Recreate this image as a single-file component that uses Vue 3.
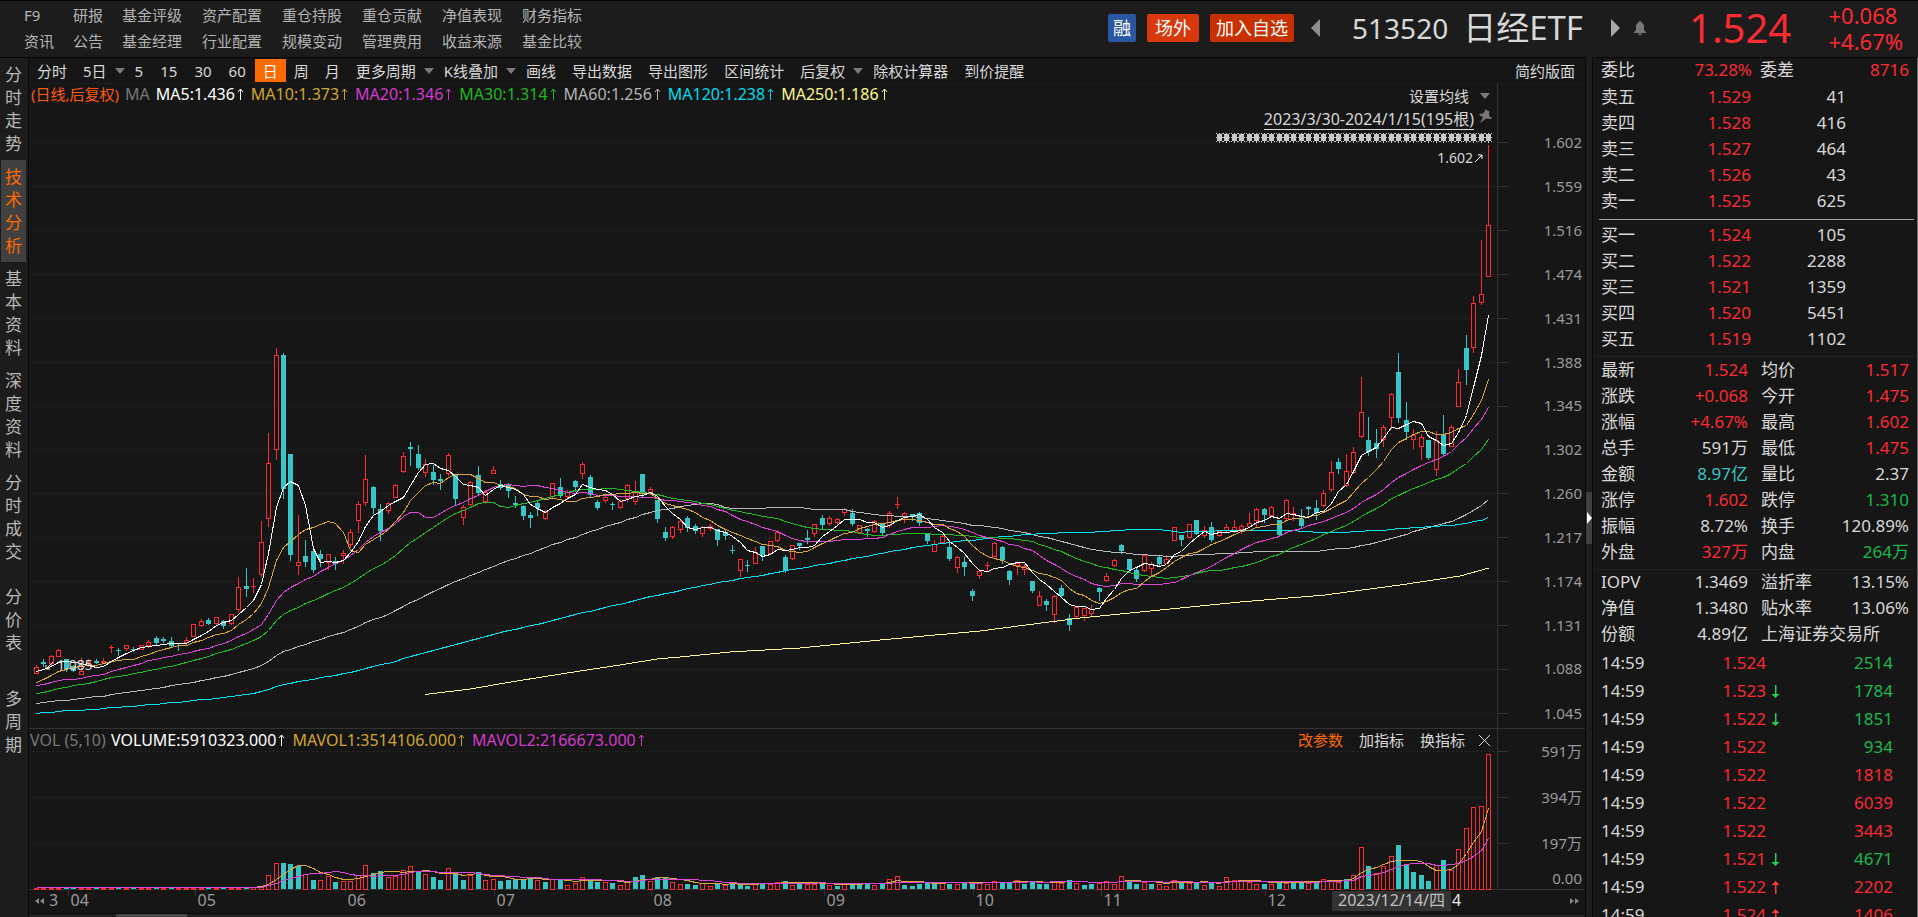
<script setup>
const nav = [
  ['F9', '研报', '基金评级', '资产配置', '重仓持股', '重仓贡献', '净值表现', '财务指标'],
  ['资讯', '公告', '基金经理', '行业配置', '规模变动', '管理费用', '收益来源', '基金比较']
]
const sideTabs = ['分时走势', '技术分析', '基本资料', '深度资料', '分时成交', '分价表', '多周期']
const tools = [
  { t: '分时' }, { t: '5日', drop: true }, { t: '5', num: true }, { t: '15', num: true },
  { t: '30', num: true }, { t: '60', num: true }, { t: '日', on: true }, { t: '周' }, { t: '月' },
  { t: '更多周期', drop: true }, { t: 'K线叠加', drop: true }, { t: '画线' }, { t: '导出数据' },
  { t: '导出图形' }, { t: '区间统计' }, { t: '后复权', drop: true }, { t: '除权计算器' }, { t: '到价提醒' }
]
const maLegend = [
  { t: 'MA5:1.436', c: 'white' }, { t: 'MA10:1.373', c: 'gold' }, { t: 'MA20:1.346', c: 'magenta' },
  { t: 'MA30:1.314', c: 'lime' }, { t: 'MA60:1.256', c: 'silver' }, { t: 'MA120:1.238', c: 'cyan' },
  { t: 'MA250:1.186', c: 'cream' }
]
const volLegend = [
  { t: 'VOLUME:5910323.000', c: 'white' }, { t: 'MAVOL1:3514106.000', c: 'gold' },
  { t: 'MAVOL2:2166673.000', c: 'magenta' }
]
const asks = [['卖五', '1.529', 41], ['卖四', '1.528', 416], ['卖三', '1.527', 464], ['卖二', '1.526', 43], ['卖一', '1.525', 625]]
const bids = [['买一', '1.524', 105], ['买二', '1.522', 2288], ['买三', '1.521', 1359], ['买四', '1.520', 5451], ['买五', '1.519', 1102]]
const stats = [
  ['最新', '1.524', 'up', '均价', '1.517', 'up'],
  ['涨跌', '+0.068', 'up', '今开', '1.475', 'up'],
  ['涨幅', '+4.67%', 'up', '最高', '1.602', 'up'],
  ['总手', '591万', '', '最低', '1.475', 'up'],
  ['金额', '8.97亿', 'teal', '量比', '2.37', ''],
  ['涨停', '1.602', 'up', '跌停', '1.310', 'down'],
  ['振幅', '8.72%', '', '换手', '120.89%', ''],
  ['外盘', '327万', 'up', '内盘', '264万', 'down']
]
const fund = [
  ['IOPV', '1.3469', '溢折率', '13.15%'],
  ['净值', '1.3480', '贴水率', '13.06%']
]
const ticks = [
  ['1.524', 0, 2514, 'down'], ['1.523', -1, 1784, 'down'], ['1.522', -1, 1851, 'down'],
  ['1.522', 0, 934, 'down'], ['1.522', 0, 1818, 'up'], ['1.522', 0, 6039, 'up'],
  ['1.522', 0, 3443, 'up'], ['1.521', -1, 4671, 'down'], ['1.522', 1, 2202, 'up'], ['1.524', 1, 1406, 'up']
]

/* chart space: x 29-1585, y 84-913 */
const VX = 29, VY = 84, VW = 1556, VH = 829
const px = x => ((x - VX) / VW * 100) + '%'
const py = y => ((y - VY) / VH * 100) + '%'

/* each candle: direction, body top, body bottom, high, low */
const raw = `r667,673,665,673 t662,664,659,666 r656,663,655,665 r650,656,649,656 t659,669,659,671 t666,671,665,671
r671,674,658,674 r662,663,659,666 t661,663,659,663 r661,662,658,663 r647,647,645,652 t650,650,648,655 r645,648,645,650
t649,649,647,651 r645,649,645,649 r642,645,640,647 t638,643,636,644 t639,641,637,642 t641,646,637,646 t643,644,643,650
r640,642,637,644 r624,636,624,636 r621,625,619,626 t620,624,618,624 r617,623,617,625 t621,626,620,628 r614,623,614,624
r587,609,577,611 t586,589,568,596 r586,586,578,592 r542,574,521,576 r463,518,433,526 r355,449,348,459 t355,489,353,498
t454,555,454,560 r562,565,515,574 t556,562,540,566 t551,570,550,572 t554,559,550,566 r554,562,554,569 t561,564,557,569
r553,555,550,563 r532,544,529,547 r504,520,501,532 r479,502,455,505 t487,508,486,513 t509,531,504,540 r503,510,502,513
r485,497,484,497 r456,471,452,472 t447,449,442,465 t454,468,445,469 r464,472,459,476 t472,480,465,484 t479,481,474,489
r455,473,453,475 t475,499,474,505 r507,517,505,524 r482,504,481,505 t475,493,466,494 r492,501,490,503 r470,473,466,473
t484,488,480,489 t484,491,483,497 t503,505,496,507 t506,516,505,519 t515,518,512,527 t503,508,501,515 r512,518,510,519
r483,496,483,497 t487,496,478,497 r492,496,490,499 t481,487,480,491 r464,473,462,478 t477,495,475,496 t502,508,500,509
r497,500,495,502 t504,504,502,509 r501,507,499,508 r485,498,484,501 r491,501,481,504 t474,494,474,497 r489,492,487,494
t500,519,500,522 t532,538,527,540 r527,536,526,538 r521,529,520,532 t518,528,516,531 t526,531,524,533 r527,533,526,536
r526,528,524,530 t529,540,529,545 t532,536,530,539 t550,550,545,553 r559,570,559,576 t565,565,560,571 r552,563,547,563
t546,555,546,560 r541,553,541,553 r532,540,530,541 t557,570,555,572 r545,558,545,559 t543,546,543,549 t538,540,530,543
r524,533,524,536 t518,525,515,528 r518,523,516,525 r519,522,518,524 r509,512,508,515 t513,524,509,525 r525,532,525,533
t529,531,528,536 r521,531,520,532 t523,533,523,535 r513,525,511,527 r504,504,497,508 r513,516,512,522 t514,516,514,520
t513,523,512,525 t533,541,533,543 r544,551,540,551 r536,542,534,542 t547,559,540,560 r557,567,556,572 t562,567,557,575
t591,596,589,600 r571,575,569,578 r565,565,562,570 r543,556,542,556 t547,560,546,563 t571,580,570,584 r563,565,563,574
r566,569,564,574 t581,591,581,592 r596,605,591,605 t601,605,599,610 r596,614,595,622 t588,596,585,597 t618,625,614,630
r607,616,606,618 r608,615,608,620 r609,613,605,615 t588,592,587,600 r576,580,573,581 r560,565,559,566 t545,551,544,553
t559,570,559,572 t570,579,568,581 r555,570,554,571 r564,568,562,575 t557,564,555,566 r559,563,555,563 r527,540,527,540
t535,540,535,545 r524,537,524,537 t520,534,520,534 r530,535,526,537 t527,540,522,541 r531,535,530,536 r527,530,524,532
r527,530,520,532 r526,529,524,533 r523,526,513,527 r509,520,508,526 t509,515,508,522 r507,515,506,516 t520,535,520,536
r500,518,499,519 r513,514,507,520 t519,526,509,527 t507,509,506,514 t508,513,500,519 r493,505,490,506 r472,489,461,491
t462,469,458,473 r471,485,454,486 r452,472,447,473 r412,436,377,437 t440,452,417,455 t443,449,429,457 r427,439,425,446
r394,417,393,428 t372,418,353,422 t420,432,402,439 r435,439,429,448 r437,446,434,459 t440,458,440,459 r440,469,431,475
t435,454,415,455 r427,446,425,446 r382,406,369,406 t348,370,335,384 r303,347,296,352 r294,302,240,304 r225,276,145,276`
const cx = i => Math.round(36 + 7.485 * i) + 0.5
const candles = raw.split(/\s+/).map((s, i) => {
  const [top, bottom, high, low] = s.slice(1).split(',').map(Number)
  const up = s[0] === 'r'
  return { x: cx(i), up, top, bottom, high, low, close: up ? top : bottom }
})

/* closes before the first visible day, oldest first */
const history = [[60, 722], [30, 713], [10, 709], [10, 689], [5, 692], [4, 672]]
  .flatMap(([n, v]) => Array(n).fill(v))
const average = (list, n, k) => {
  let sum = 0
  for (let j = k - n + 1; j <= k; j++) sum += list[j]
  return sum / n
}
const closes = [...history, ...candles.map(c => c.close)]
const maPath = n => candles.map((c, i) => `${c.x},${Math.round(average(closes, n, i + history.length)) + 0.5}`).join(' ')
const lines = [
  { c: 'silver', p: maPath(60) }, { c: 'cyan', p: maPath(120) }, { c: 'lime', p: maPath(30) },
  { c: 'magenta', p: maPath(20) }, { c: 'gold', p: maPath(10) }, { c: 'white', p: maPath(5) },
  { c: 'cream', p: '425,694.5 470,689 517,681 580,671 620,665 657,659 680,657 730,652 800,648 880,640 980,631 1080,618 1180,608 1240,602 1325,595 1400,585 1460,576 1489,568' }
]

const volumes = [
  ...Array(28).fill(1), 2, 2, 3,
  14, 26, 26, 25, 23, 15, 9, 9, 13, 7, 8, 8, 14, 24, 16, 18, 12, 13, 19, 23, 18, 15, 12, 9, 21, 16, 9, 14, 17, 9,
  10, 8, 9, 10, 10, 11, 9, 7, 10, 10, 4, 6, 12, 9, 7, 7, 6, 4, 7, 12, 14, 8, 12, 11, 7, 5, 5, 4, 6, 3, 5, 4, 5, 5,
  3, 5, 5, 5, 7, 8, 4, 6, 5, 5, 5, 4, 3, 5, 5, 5, 5, 4, 6, 10, 13, 4, 3, 5, 6, 6, 6, 5, 5, 6, 6, 6, 5, 8, 6, 6, 9,
  5, 8, 5, 5, 8, 6, 9, 6, 4, 5, 6, 8, 5, 13, 7, 5, 7, 5, 5, 3, 9, 7, 6, 7, 4, 7, 3, 12, 9, 9, 7, 5, 5, 5, 7, 6, 7, 7,
  6, 7, 10, 8, 7, 10, 14, 42, 23, 16, 23, 33, 44, 25, 17, 14, 8, 24, 29, 19, 40, 61, 82, 83, 135
]
const bars = volumes.map((h, i) => ({ x: cx(i), h, up: closes[history.length + i] <= closes[history.length + i - 1] }))
const volHistory = [...Array(9).fill(1), ...volumes]
const volPath = n => bars.map((b, i) => `${b.x},${888.5 - Math.round(average(volHistory, n, i + 9))}`).join(' ')
const volLines = [{ c: 'gold', p: volPath(5) }, { c: 'magenta', p: volPath(10) }]

const prices = ['1.602', '1.559', '1.516', '1.474', '1.431', '1.388', '1.345', '1.302', '1.260', '1.217', '1.174', '1.131', '1.088', '1.045']
  .map((t, i) => ({ t, y: Math.round(142 + i * 43.92) + 0.5 }))
const volAxis = [{ t: '591万', y: 751.5 }, { t: '394万', y: 797.5 }, { t: '197万', y: 843.5 }]
const months = [
  { t: '04', x: 68.5 }, { t: '05', x: 195.5 }, { t: '06', x: 345.5 }, { t: '07', x: 494.5 }, { t: '08', x: 651.5 },
  { t: '09', x: 824.5 }, { t: '10', x: 973.5 }, { t: '11', x: 1101.5 }, { t: '12', x: 1265.5 }
]
const stars = candles.slice(158).map(c => c.x)
</script>

<template>
  <div class="app">
    <header class="top">
      <nav class="nav">
        <template v-for="row in nav" :key="row[0]">
          <a v-for="n in row" :key="n" href="#">{{ n }}</a>
        </template>
      </nav>
      <div class="ident">
        <span class="badge blue">融</span>
        <button class="badge orange">场外</button>
        <button class="badge red">加入自选</button>
        <button class="step prev" aria-label="上一个"><svg width="9" height="18" viewBox="0 0 9 18"><path d="M9 0V18L0 9z" fill="#8f8f8f" /></svg></button>
        <span class="code">513520</span>
        <h1>日经ETF</h1>
        <button class="step next" aria-label="下一个"><svg width="9" height="18" viewBox="0 0 9 18"><path d="M0 0V18L9 9z" fill="#a8a8a8" /></svg></button>
        <button class="step" aria-label="提醒"><svg width="12" height="14" viewBox="0 0 12 14"><path d="M5 0h2v1.500c2 .4 3 2 3 4v3.500l2 2v1H0v-1l2-2V5.500c0-2 1-3.600 3-4zM4.500 12.500h3V14h-3z" fill="#777" /></svg></button>
      </div>
      <div class="quote">
        <strong>1.524</strong>
        <div><span>+0.068</span><span>+4.67%</span></div>
      </div>
    </header>

    <div class="body">
      <aside class="side">
        <button v-for="(s, i) in sideTabs" :key="s" :class="{ on: i === 1 }">{{ s }}</button>
      </aside>

      <main class="main">
        <div class="tools">
          <button v-for="b in tools" :key="b.t" :class="{ on: b.on, num: b.num, drop: b.drop }">
            {{ b.t }}<i v-if="b.drop" class="caret"></i>
          </button>
          <button class="simple">简约版面</button>
        </div>

        <div class="chart">
          <svg class="plot" viewBox="29 84 1556 829" preserveAspectRatio="none" shape-rendering="crispEdges">
            <g class="grid">
              <line v-for="p in prices" :key="p.t" x1="29" x2="1497" :y1="p.y" :y2="p.y" />
              <line v-for="p in volAxis" :key="p.t" x1="29" x2="1497" :y1="p.y" :y2="p.y" />
            </g>
            <g class="axis">
              <line v-for="p in prices" :key="p.t" x1="1497" x2="1508" :y1="p.y" :y2="p.y" />
              <line v-for="p in volAxis" :key="p.t" x1="1497" x2="1508" :y1="p.y" :y2="p.y" />
              <line x1="1497.5" x2="1497.5" y1="84" y2="889" />
              <line x1="29" x2="1585" y1="728.5" y2="728.5" />
              <line x1="29" x2="1585" y1="889.5" y2="889.5" />
              <line v-for="m in months" :key="m.t" :x1="m.x" :x2="m.x" y1="889" y2="896" />
              <line x1="1422.5" x2="1422.5" y1="889" y2="896" />
            </g>
            <g v-for="(c, i) in candles" :key="i" :class="c.up ? 'cu' : 'cd'">
              <line :x1="c.x" :x2="c.x" :y1="c.high" :y2="c.top" />
              <line :x1="c.x" :x2="c.x" :y1="c.bottom" :y2="c.low + 1" />
              <rect v-if="c.up" :x="c.x - 2" :y="c.top + 0.5" width="4" :height="c.bottom - c.top" />
              <line v-if="c.up && c.bottom === c.top" :x1="c.x - 2.5" :x2="c.x + 2.5" :y1="c.top + 0.5" :y2="c.top + 0.5" />
              <rect v-if="!c.up" :x="c.x - 2.5" :y="c.top" width="5" :height="Math.max(1, c.bottom - c.top)" />
            </g>
            <polyline v-for="l in lines" :key="l.c" :class="'s-' + l.c" :points="l.p" />
            <g v-for="(b, i) in bars" :key="i" :class="b.up ? 'cu' : 'cd'">
              <rect v-if="b.up" :x="b.x - 2" :y="889.5 - b.h" width="4" :height="b.h" />
              <rect v-else :x="b.x - 2.5" :y="889 - b.h" width="5" :height="b.h" />
            </g>
            <polyline v-for="l in volLines" :key="l.c" :class="'s-' + l.c" :points="l.p" />
            <g fill="#c8c8c8">
              <path v-for="x in stars" :key="x" :d="`M${x - 3.5} 133h1v1h2v-1.500h1v1.500h2v-1h1v1h-1v3h1v1h-1v3h1v1h-1v-1h-2v1.500h-1v-1.500h-2v1h-1v-1h1v-3h-1v-1h1v-3h-1z`" />
            </g>
          </svg>

          <div class="legend">
            <span class="orange-text">(日线,后复权)</span><span class="dim">MA</span>
            <span v-for="m in maLegend" :key="m.t" class="item" :class="m.c">{{ m.t }}<svg width="7" height="12" viewBox="0 0 7 12"><path d="M3.500 12V1M1 4L3.500 1 6 4" /></svg></span>
          </div>
          <button class="set-ma">设置均线<i class="caret"></i></button>
          <div class="range"><a href="#">2023/3/30-2024/1/15(195根)</a>
            <svg width="14" height="14" viewBox="0 0 14 14"><path d="M7 0l5 3-1 1 .5 3.500 2.500 1-1 1.500-5-.5L2 14l3-6L1 6l1-1.500 2.500.5L7 2z" fill="#777" /></svg>
          </div>
          <div class="mark high" :style="{ top: py(158) }">1.602<svg width="9" height="9" viewBox="0 0 9 9"><path d="M1 8L8 1M4 1h4v4" /></svg></div>
          <div class="mark low" :style="{ top: py(665), left: px(45) }"><svg width="9" height="9" viewBox="0 0 9 9"><path d="M8 1L1 8M1 4v4h4" /></svg>1.085</div>

          <div class="vol-head" :style="{ top: py(728) }">
            <span class="dim vol-name">VOL (5,10)</span>
            <span v-for="m in volLegend" :key="m.t" class="item" :class="m.c">{{ m.t }}<svg width="7" height="12" viewBox="0 0 7 12"><path d="M3.500 12V1M1 4L3.500 1 6 4" /></svg></span>
            <div class="vol-tools">
              <button class="hot">改参数</button><button>加指标</button><button>换指标</button>
              <button class="close" aria-label="关闭"><svg width="13" height="13" viewBox="0 0 13 13"><path d="M1 1L12 12M12 1L1 12" stroke="#d8d8d8" fill="none" /></svg></button>
            </div>
          </div>

          <span v-for="p in prices" :key="p.t" class="tag" :style="{ top: py(p.y) }">{{ p.t }}</span>
          <span v-for="p in volAxis" :key="p.t" class="tag" :style="{ top: py(p.y) }">{{ p.t }}</span>
          <span class="tag" :style="{ top: py(878.5) }">0.00</span>

          <span class="month" :style="{ left: px(49) }">3</span>
          <span v-for="m in months" :key="m.t" class="month" :style="{ left: px(m.x + 2) }">{{ m.t }}</span>
          <span class="month bright" :style="{ left: px(1452) }">4</span>
          <span class="cursor-date" :style="{ left: px(1332) }">2023/12/14/四</span>
          <svg class="rew" width="9" height="6" viewBox="0 0 9 6"><path d="M4 0V6L0 3zM9 0V6L5 3z" fill="#888" /></svg>
          <svg class="fwd" width="9" height="6" viewBox="0 0 9 6"><path d="M0 0V6L4 3zM5 0V6L9 3z" fill="#888" /></svg>
        </div>
        <div class="hscroll"><div class="thumb"></div></div>
      </main>

      <div class="split"><button aria-label="收起"><svg width="5" height="12" viewBox="0 0 5 12"><path d="M0 0V12L5 6z" fill="#fff" /></svg></button></div>

      <section class="panel">
        <table class="stats first">
          <tbody><tr><th>委比</th><td class="up">73.28%</td><th>委差</th><td class="up">8716</td></tr></tbody>
        </table>
        <table class="book">
          <tbody><tr v-for="r in asks" :key="r[0]"><th>{{ r[0] }}</th><td class="up">{{ r[1] }}</td><td>{{ r[2] }}</td><td></td></tr></tbody>
        </table>
        <hr>
        <table class="book">
          <tbody><tr v-for="r in bids" :key="r[0]"><th>{{ r[0] }}</th><td class="up">{{ r[1] }}</td><td>{{ r[2] }}</td><td></td></tr></tbody>
        </table>
        <table class="stats ruled">
          <tbody>
            <tr v-for="r in stats" :key="r[0]"><th>{{ r[0] }}</th><td :class="r[2]">{{ r[1] }}</td><th>{{ r[3] }}</th><td :class="r[5]">{{ r[4] }}</td></tr>
          </tbody>
        </table>
        <table class="stats ruled">
          <tbody>
            <tr v-for="r in fund" :key="r[0]"><th>{{ r[0] }}</th><td>{{ r[1] }}</td><th>{{ r[2] }}</th><td>{{ r[3] }}</td></tr>
            <tr><th>份额</th><td>4.89亿</td><th colspan="2">上海证券交易所</th></tr>
          </tbody>
        </table>
        <table class="ticks">
          <tbody>
            <tr v-for="(r, i) in ticks" :key="i">
              <th>14:59</th><td class="up">{{ r[0] }}</td>
              <td class="dir"><svg v-if="r[1]" width="9" height="13" viewBox="0 0 9 13"><path v-if="r[1] > 0" d="M4 13V4H0.500L4.500 0 8.500 4H5.500V13z" fill="#ff3b3b" /><path v-else d="M4 0V9H0.500L4.500 13 8.500 9H5.500V0z" fill="#1fd05a" /></svg></td>
              <td :class="r[3]">{{ r[2] }}</td>
            </tr>
          </tbody>
        </table>
      </section>
    </div>
  </div>
</template>

<style>
html, body { margin: 0; background: #161616; }
</style>

<style scoped>
.app { height: 100vh; display: flex; flex-direction: column; overflow: hidden; background: #161616; color: #d8d8d8; font: 15px/20px "Noto Sans", "Noto Sans CJK SC", sans-serif; }
.app * { box-sizing: border-box; }
button { font: inherit; color: inherit; background: none; border: 0; padding: 0; margin: 0; white-space: nowrap; }
a { color: inherit; text-decoration: none; }
svg { display: block; flex: none; }

.top { flex: none; height: 57px; display: flex; align-items: center; padding-bottom: 2px; background: #1c1c1c; border-top: 1px solid #050505; }
.nav { display: grid; grid-template-columns: 49px 49px repeat(6, 80px); grid-auto-rows: 26px; align-items: center; padding-left: 24px; color: #b4b4b4; white-space: nowrap; }
.ident { margin-left: auto; display: flex; align-items: center; }
.badge { height: 28px; padding: 0 5px; border-radius: 2px; font-size: 18px; line-height: 28px; color: #fff; }
.blue { background: #2a57a3; }
.orange { background: #d8380a; margin-left: 11px; padding: 0 8px; }
.red { background: #c93000; margin: 0 17px 0 11px; padding: 0 6px; }
.code { margin-left: 32px; font-size: 28px; line-height: 36px; }
h1 { margin: 0 28px 0 15px; font-size: 33px; line-height: 40px; font-weight: 400; }
.next { margin-right: 14px; }
.quote { flex: none; width: 272px; display: flex; align-items: center; justify-content: space-between; padding: 0 15px 0 43px; color: #fb2a33; }
.quote strong { font-size: 40px; line-height: 48px; font-weight: 400; }
.quote span { display: block; font-size: 22px; line-height: 26px; }

.body { flex: 1; min-height: 0; display: flex; }
.side { flex: none; width: 29px; display: flex; flex-direction: column; padding: 0 2px 0 1px; background: #1c1c1c; border-top: 1px solid #080808; border-right: 1px solid #080808; overflow: hidden; }
.side button { flex: none; height: 102px; padding: 0 4px; font-size: 17px; line-height: 23px; white-space: normal; word-break: break-all; color: #b8b8b8; }
.side .on { background: #404040; color: #ff6a00; }

.main { flex: 1; min-width: 0; display: flex; flex-direction: column; border-top: 1px solid #080808; }
.tools { flex: none; height: 26px; display: flex; padding-top: 1px; border-bottom: 1px solid #1e1e1e; }
.tools button { display: flex; align-items: center; height: 24px; padding: 0 8px; }
.tools .num { padding-right: 9px; }
.tools .drop { padding-right: 2px; }
.tools .on { height: 23px; background: #ff6a00; color: #fff; }
.tools .simple { margin-left: auto; padding-right: 10px; }
.caret { width: 0; height: 0; margin-left: 8px; border: 5px solid transparent; border-top: 6px solid #7a7a7a; border-bottom: 0; }

.chart { position: relative; flex: 1; min-height: 0; overflow: hidden; }
.plot { width: 100%; height: 100%; }
.plot line { stroke-width: 1; }
.plot polyline { fill: none; stroke-width: 1; }
.grid line { stroke: #383838; stroke-dasharray: 1 3; }
.axis line { stroke: #333; }
.cu line, .cu rect { stroke: #fb2a33; fill: #161616; }
.cd line { stroke: #38c5c5; }
.cd rect { fill: #38c5c5; }
.s-white { stroke: #fff; } .s-gold { stroke: #d6a83c; } .s-magenta { stroke: #dc46d4; }
.s-lime { stroke: #24bc24; } .s-silver { stroke: #bababa; } .s-cyan { stroke: #00e4f4; } .s-cream { stroke: #fffa9c; }
.white { color: #fff; } .gold { color: #d0a536; } .magenta { color: #d23bce; } .lime { color: #20b520; }
.silver { color: #b4b4b4; } .cyan { color: #00dcec; } .cream { color: #fbf690; }
.dim { color: #787878; font-size: 16px; }
.orange-text { color: #ff5a10; margin-right: 6px; }
.legend { position: absolute; top: 0; left: 2px; display: flex; align-items: center; height: 20px; white-space: nowrap; }
.legend .dim { margin-right: 6px; }
.item { display: flex; align-items: center; font-size: 16px; }
.item svg { margin: 0 7px 0 2px; fill: none; stroke: currentColor; }
.set-ma { position: absolute; top: 2px; right: 95px; display: flex; align-items: center; height: 20px; }
.set-ma .caret { margin-left: 11px; }
.range { position: absolute; top: 25px; right: 93px; display: flex; gap: 4px; font-size: 16px; line-height: 20px; white-space: nowrap; }
.range a { border-bottom: 1px solid #d8d8d8; }
.mark { position: absolute; display: flex; align-items: center; gap: 1px; height: 16px; margin-top: -8px; font-size: 14px; line-height: 16px; }
.mark svg { fill: none; stroke: #fff; }
.high { right: 102px; }
.low { gap: 3px; }
.vol-head { position: absolute; left: 1px; right: 94px; height: 24px; display: flex; align-items: center; white-space: nowrap; }
.vol-name { width: 81px; }
.vol-tools { margin-left: auto; display: flex; gap: 16px; align-items: center; }
.hot { color: #ff6a00; }
.close { margin-left: -3px; }
.tag { position: absolute; right: 3px; margin-top: -11px; line-height: 20px; color: #9a9a9a; }
.month { position: absolute; bottom: 3px; font-size: 16px; line-height: 20px; color: #9a9a9a; }
.bright { color: #e8e8e8; }
.cursor-date { position: absolute; bottom: 2px; height: 20px; padding: 0 6px; background: #333; font-size: 16px; line-height: 19px; white-space: nowrap; color: #c0c0c0; }
.rew { position: absolute; bottom: 9px; left: 6px; }
.fwd { position: absolute; bottom: 9px; right: 6px; }
.hscroll { flex: none; height: 4px; background: #202020; border-top: 1px solid #0a0a0a; }
.thumb { width: 71px; height: 3px; margin-left: 87px; background: #484848; }

.split { flex: none; width: 8px; display: flex; align-items: center; background: #1d1d1d; border-left: 1px solid #080808; border-right: 1px solid #080808; }
.split button { display: flex; align-items: center; width: 7px; height: 52px; margin-top: 61px; background: #414141; padding-left: 1px; }

.panel { flex: none; width: 325px; overflow: hidden; border-top: 1px solid #080808; border-right: 1px solid #6a6a6a; font-size: 17px; }
table { width: 100%; table-layout: fixed; border-collapse: collapse; }
tr { height: 26px; }
th, td { padding: 0; line-height: 24px; text-align: right; font-weight: 400; white-space: nowrap; }
th { text-align: left; padding-left: 8px; }
.book th { width: 53px; }
.book td:nth-child(2) { width: 105px; }
.book td:nth-child(3) { width: 95px; }
.stats th { width: 66px; }
.stats td:nth-child(2) { width: 89px; }
.stats th:nth-child(3) { padding-left: 13px; width: 75px; }
.stats td:nth-child(4) { padding-right: 8px; }
.first tr { height: 24px; }
.first { margin-bottom: 2px; }
.first td:nth-child(2) { width: 93px; }
.first th:nth-child(3) { padding-left: 8px; width: 71px; }
hr { height: 1px; margin: 5px 3px 2px 6px; border: 0; background: #a0a0a0; }
.ruled { margin-top: 4px; border-top: 1px solid #1f1f1f; }
.ticks { margin-top: 2px; }
.ticks tr { height: 28px; }
.ticks th { width: 73px; }
.ticks td:nth-child(2) { width: 100px; }
.ticks .dir { width: 15px; padding-left: 5px; }
.ticks td:nth-child(4) { padding-right: 24px; }
.up { color: #fb2a33; }
.down { color: #1cb84e; }
.teal { color: #38c5c5; }
</style>
